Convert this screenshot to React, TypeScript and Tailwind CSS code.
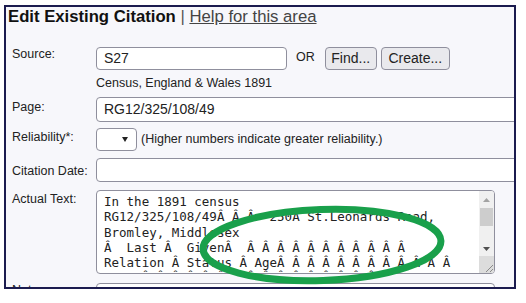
import React from 'react';

const lines = [
  'In the 1891 census',
  'RG12/325/108/49Â Â Â  250A St.Leonards Road,',
  'Bromley, Middlesex',
  'Â  Last Â  GivenÂ  Â Â Â Â Â Â Â Â Â Â Â',
  'Relation Â Status Â AgeÂ Â Â Â Â Â Â Â Â Â Â Â',
  '     Â Â Â Â Â Â Â Â Â Â Â Â Â Â Â Â Â Â',
];

const Label = ({ children, offset }: { children: React.ReactNode; offset: string }) => (
  <div className={`w-[90px] shrink-0 pl-[6px] text-[12.5px] leading-[14px] text-[#222] ${offset}`}>{children}</div>
);

const inputCls = 'bg-white border border-[#8f8f9d] rounded-[4px]';

const Button = ({ children, w }: { children: React.ReactNode; w: string }) => (
  <div className={`${w} h-[23px] flex items-center justify-center bg-[#e9e9ed] border border-[#8f8f9d] rounded-[4px] text-[14px] text-[#222]`}>
    {children}
  </div>
);

export default function App() {
  return (
    <div className="relative w-[526px] h-[303px] bg-white overflow-hidden font-['Liberation_Sans',Arial,sans-serif]">
      <div className="ml-[4px] mt-[5px] w-[512px] h-[284px] border-2 border-[#1b1b4f] bg-[#f7f7fb] overflow-hidden">
        <div className="h-[40px] pl-[2px] text-[16.7px] leading-[19px]">
          <span className="font-bold text-[#111]">Edit Existing Citation</span>
          <span className="text-[#555]"> | </span>
          <span className="underline text-[#444]">Help for this area</span>
        </div>

        <div className="flex items-start">
          <Label offset="pt-0">Source:</Label>
          <div className={`${inputCls} w-[191px] h-[23px] pl-[7px] flex items-center text-[14px] text-[#222]`}>S27</div>
          <div className="ml-[9px] mr-[10px] self-center -mt-[2px] text-[12.5px] text-[#222]">OR</div>
          <Button w="w-[52px]">Find...</Button>
          <div className="w-[4px]" />
          <Button w="w-[69px]">Create...</Button>
        </div>
        <div className="pl-[90px] mt-[6px] text-[12.5px] leading-[14px] text-[#222]">Census, England &amp; Wales 1891</div>

        <div className="flex items-start mt-[7px]">
          <Label offset="pt-[3px]">Page:</Label>
          <div className={`${inputCls} w-[440px] h-[25px] shrink-0 pl-[7px] flex items-center text-[14px] text-[#222]`}>RG12/325/108/49</div>
        </div>

        <div className="flex items-start mt-[6px]">
          <Label offset="pt-[2px]">Reliability*:</Label>
          <div className={`${inputCls} w-[41px] h-[23px] flex items-center justify-end pr-[8px]`}>
            <svg width="6" height="5" viewBox="0 0 6 5"><polygon points="0,0 6,0 3,5" fill="#222" /></svg>
          </div>
          <div className="ml-[4px] self-center text-[12.5px] text-[#222]">(Higher numbers indicate greater reliability.)</div>
        </div>

        <div className="flex items-start mt-[7px]">
          <Label offset="pt-[6px]">Citation Date:</Label>
          <div className={`${inputCls} w-[440px] h-[24px] shrink-0`} />
        </div>

        <div className="flex items-start mt-[8px]">
          <Label offset="pt-[2px]">Actual Text:</Label>
          <div className={`${inputCls} w-[399px] h-[84px] flex overflow-hidden`}>
            <div className="flex-1 pl-[7px] pt-[3px] font-['DejaVu_Sans_Mono',monospace] text-[12.5px] leading-[15.3px] text-[#222] whitespace-pre overflow-hidden">
              {lines.map((l, i) => (
                <div key={i}>{l}</div>
              ))}
            </div>
            <div className="w-[15px] bg-[#f0f0f0] flex flex-col items-center">
              <div className="h-[14px] flex items-center justify-center mt-[2px]">
                <svg width="7" height="4" viewBox="0 0 7 4"><polygon points="0,4 7,4 3.5,0" fill="#a3a3a3" /></svg>
              </div>
              <div className="mt-[1px] w-[13px] h-[18px] bg-[#cdcdcd]" />
              <div className="flex-1" />
              <div className="h-[14px] flex items-center justify-center">
                <svg width="7" height="4" viewBox="0 0 7 4"><polygon points="0,0 7,0 3.5,4" fill="#505050" /></svg>
              </div>
              <div className="w-[15px] h-[17px] bg-[#dcdcdc] flex items-end justify-end">
                <svg width="10" height="10" viewBox="0 0 10 10">
                  <line x1="9" y1="2" x2="2" y2="9" stroke="#8a8a8a" strokeWidth="1" />
                  <line x1="9" y1="6" x2="6" y2="9" stroke="#8a8a8a" strokeWidth="1" />
                </svg>
              </div>
            </div>
          </div>
        </div>

        <div className="flex items-start mt-[9px]">
          <Label offset="pt-0">Notes:</Label>
          <div className={`${inputCls} w-[399px] h-[24px]`} />
        </div>
      </div>

      <svg className="absolute inset-0 pointer-events-none" width="526" height="303" viewBox="0 0 526 303">
        <ellipse cx="322" cy="245" rx="119" ry="35.5" transform="rotate(-2 322 245)" fill="none" stroke="#19a04b" strokeWidth="7" />
      </svg>
    </div>
  );
}
